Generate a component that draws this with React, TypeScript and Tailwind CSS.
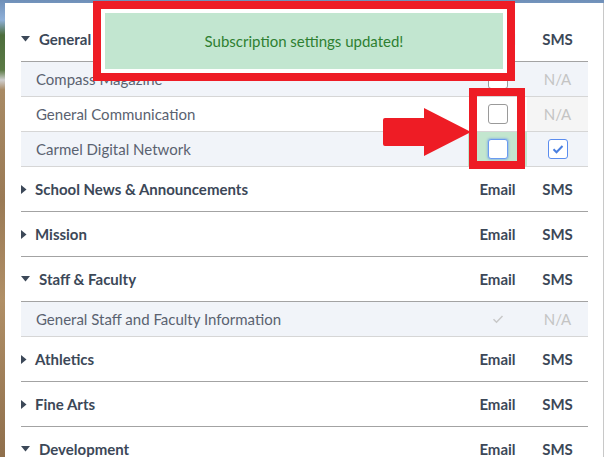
import React from "react";

type Sub = { name: string; email: "box" | "focus" | "done"; sms: "na" | "checked"; smsGray?: boolean; emailGreen?: boolean };
type Group = { title: string; open: boolean; subs?: Sub[]; blueEmail?: boolean };

const groups: Group[] = [
  {
    title: "General Subscriptions",
    open: true,
    blueEmail: true,
    subs: [
      { name: "Compass Magazine", email: "box", sms: "na" },
      { name: "General Communication", email: "box", sms: "na", smsGray: true },
      { name: "Carmel Digital Network", email: "focus", sms: "checked", emailGreen: true },
    ],
  },
  { title: "School News & Announcements", open: false },
  { title: "Mission", open: false },
  {
    title: "Staff & Faculty",
    open: true,
    subs: [{ name: "General Staff and Faculty Information", email: "done", sms: "na" }],
  },
  { title: "Athletics", open: false },
  { title: "Fine Arts", open: false },
  { title: "Development", open: true },
];

function Caret({ open }: { open: boolean }) {
  return open ? (
    <svg width="9" height="6" viewBox="0 0 9 6" className="mr-[9px]">
      <path d="M0 0h9L4.5 5.5z" fill="#3c4858" />
    </svg>
  ) : (
    <svg width="6" height="9" viewBox="0 0 6 9" className="mr-[8px]">
      <path d="M0 0v9l5.5-4.5z" fill="#3c4858" />
    </svg>
  );
}

function Checkbox({ kind }: { kind: "box" | "focus" | "checked" }) {
  if (kind === "checked") {
    return (
      <div className="w-[20px] h-[20px] rounded-[3px] border border-[#5b8def] bg-white flex items-center justify-center">
        <svg width="12" height="10" viewBox="0 0 12 10">
          <path d="M1.5 5.2l3 3 6-6.2" stroke="#4a7fe0" strokeWidth="2" fill="none" />
        </svg>
      </div>
    );
  }
  return (
    <div
      className={
        kind === "focus"
          ? "w-[20px] h-[20px] rounded-[3px] border border-[#6a9bf0] bg-white shadow-[0_0_2px_1px_rgba(90,140,240,0.45)]"
          : "w-[20px] h-[20px] rounded-[3px] border border-[#9a9a9a] bg-white"
      }
    />
  );
}

export default function App() {
  return (
    <div
      className="relative w-[604px] h-[457px] overflow-hidden bg-[linear-gradient(180deg,#6f8fb8_0px,#8fb0d8_20px,#4d6d3c_35px,#5b7a45_70px,#cfcfcf_80px,#a88a64_90px,#9a7a55_200px,#b08f66_300px,#8f6f4c_457px)]"
      style={{ fontFamily: "Lato, 'Open Sans', sans-serif" }}
    >
      <div className="ml-[5px] mt-[3px] w-[599px] h-[454px] bg-white border-r border-[#c8c8c8] pl-[16px] pr-[15px] pt-[14px]">
        {groups.map((g) => (
          <div key={g.title}>
            <div className="h-[45px] flex items-center border-b border-[#a3a3a3] text-[15px] font-bold text-[#3c4858]">
              <div className="flex-1 flex items-center">
                <Caret open={g.open} />
                <span>{g.title}</span>
              </div>
              <div className={g.blueEmail ? "w-[59px] text-center text-[#3b6fd8]" : "w-[59px] text-center"}>Email</div>
              <div className="w-[61px] text-center">SMS</div>
            </div>
            {g.subs?.map((s, i) => (
              <div
                key={s.name}
                className={
                  i % 2 === 0
                    ? "h-[35px] flex items-stretch border-b border-[#d6d6d6] bg-[#f1f4f9] text-[15px] text-[#5a6270]"
                    : "h-[35px] flex items-stretch border-b border-[#d6d6d6] bg-white text-[15px] text-[#5a6270]"
                }
              >
                <div className="flex-1 flex items-center pl-[15px]">{s.name}</div>
                <div className={s.emailGreen ? "w-[59px] flex items-center justify-center bg-[#c3e6cf]" : "w-[59px] flex items-center justify-center"}>
                  {s.email === "done" ? (
                    <svg width="12" height="10" viewBox="0 0 12 10">
                      <path d="M1.5 5.2l3 3 6-6.2" stroke="#c8c8c8" strokeWidth="1.5" fill="none" />
                    </svg>
                  ) : (
                    <Checkbox kind={s.email} />
                  )}
                </div>
                <div className={s.smsGray ? "w-[61px] flex items-center justify-center bg-[#f5f5f5]" : "w-[61px] flex items-center justify-center"}>
                  {s.sms === "na" ? <span className="text-[#c4c4c4]">N/A</span> : <Checkbox kind="checked" />}
                </div>
              </div>
            ))}
          </div>
        ))}
      </div>

      {/* toast with red annotation frame */}
      <div className="absolute left-[93px] top-[1px] w-[422px] h-[80px] border-[8px] border-[#ee1c25] bg-white p-[4px]">
        <div className="h-full bg-[#c2e6d0] flex items-center justify-center text-[15px] text-[#2e8031]">
          Subscription settings updated!
        </div>
      </div>

      {/* red box around email checkboxes */}
      <div className="absolute left-[469px] top-[88px] w-[56px] h-[81px] border-[8px] border-[#ee1c25]" />

      {/* red arrow */}
      <svg className="absolute left-[381px] top-[106px]" width="92" height="52" viewBox="0 0 92 52">
        <path d="M2 14 Q2 12 4 12 H43 V2 L90 26 L43 50 V40 H4 Q2 40 2 38 Z" fill="#ee1c25" />
      </svg>
    </div>
  );
}
